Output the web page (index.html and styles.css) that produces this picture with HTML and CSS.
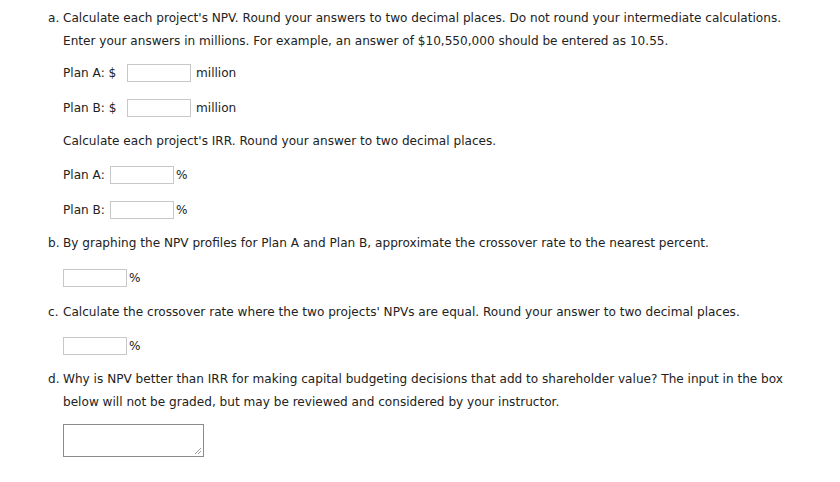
FILE: index.html
```html
<!DOCTYPE html>
<html>
<head>
<meta charset="utf-8">
<link rel="stylesheet" href="styles.css">
</head>
<body>
<div class="page">
  <div class="q">
    <span class="lbl">a.</span>
    <div class="qtext">Calculate each project's NPV. Round your answers to two decimal places. Do not round your intermediate calculations. Enter your answers in millions. For example, an answer of $10,550,000 should be entered as 10.55.</div>
  </div>
  <div class="field f1"><span class="flabel wide">Plan A: $</span><span class="box"></span><span class="unit">million</span></div>
  <div class="field f2"><span class="flabel wide">Plan B: $</span><span class="box"></span><span class="unit">million</span></div>
  <div class="sub">Calculate each project's IRR. Round your answer to two decimal places.</div>
  <div class="field f3"><span class="flabel narrow">Plan A:</span><span class="box"></span><span class="pct">%</span></div>
  <div class="field f4"><span class="flabel narrow">Plan B:</span><span class="box"></span><span class="pct">%</span></div>
  <div class="q qb">
    <span class="lbl">b.</span>
    <div class="qtext">By graphing the NPV profiles for Plan A and Plan B, approximate the crossover rate to the nearest percent.</div>
  </div>
  <div class="field f5"><span class="box"></span><span class="pct">%</span></div>
  <div class="q qc">
    <span class="lbl">c.</span>
    <div class="qtext">Calculate the crossover rate where the two projects' NPVs are equal. Round your answer to two decimal places.</div>
  </div>
  <div class="field f6"><span class="box"></span><span class="pct">%</span></div>
  <div class="q qd">
    <span class="lbl">d.</span>
    <div class="qtext">Why is NPV better than IRR for making capital budgeting decisions that add to shareholder value? The input in the box below will not be graded, but may be reviewed and considered by your instructor.</div>
  </div>
  <div class="tawrap"><span class="ta"><svg class="grip" width="9" height="9" viewBox="0 0 9 9"><path d="M8 2 L2 8 M8 5 L5 8" stroke="#999" stroke-width="1"/></svg></span></div>
</div>
</body>
</html>
```
FILE: styles.css
```css
html, body { margin: 0; padding: 0; background: #fff; }
body {
  font-family: "DejaVu Sans", Verdana, sans-serif;
  font-size: 12.1px;
  color: #222;
  line-height: 23px;
}
.page { padding: 7px 0 0 48px; width: 752px; }
.q { display: flex; }
.lbl { width: 15px; flex: none; }
.qtext { flex: 1; }
.field { display: flex; align-items: center; padding-left: 15px; height: 18px; line-height: 18px; }
.f1 { margin-top: 11px; }
.f2 { margin-top: 17px; }
.sub { padding-left: 15px; margin-top: 13px; }
.f3 { margin-top: 13px; }
.f4 { margin-top: 17px; }
.qb { margin-top: 13px; }
.f5 { margin-top: 14px; }
.qc { margin-top: 14px; }
.f6 { margin-top: 13px; }
.qd { margin-top: 13px; }
.flabel { flex: none; }
.flabel.wide { width: 64px; }
.flabel.narrow { width: 47px; }
.box {
  width: 62px; height: 16px; border: 1px solid #c8c8c8; background: #fff; flex: none; box-sizing: content-box;
}
.unit { margin-left: 5px; }
.pct { margin-left: 2px; }
.tawrap { padding-left: 15px; margin-top: 10px; }
.ta {
  display: block; position: relative; width: 139px; height: 31px; border: 1px solid #8a8a8a; background: #fff;
}
.grip { position: absolute; right: 1px; bottom: 1px; }
```
